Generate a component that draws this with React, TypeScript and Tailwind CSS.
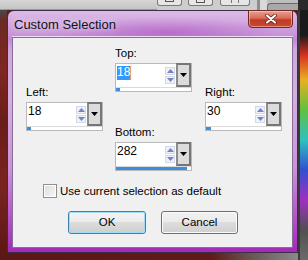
import React from "react";

function Arrow({ up }: { up?: boolean }) {
  return (
    <svg width="7" height="4" viewBox="0 0 7 4" className="block">
      {up ? (
        <polygon points="0,4 7,4 3.5,0" fill="#7483c6" />
      ) : (
        <polygon points="0,0 7,0 3.5,4" fill="#7483c6" />
      )}
    </svg>
  );
}

function NumField({
  value,
  fill,
  selected,
}: {
  value: string;
  fill: number;
  selected?: boolean;
}) {
  return (
    <div className="w-[77px] h-[29px] border border-[#b9b9b9] bg-white flex flex-col">
      <div className="flex h-[23px]">
        <div className="flex-1 pl-[1px] pt-[2px] text-[12px] leading-[13px] text-black">
          {selected ? (
            <span className="inline-block bg-[#3399ff] text-white px-0 pb-[1px] border-r border-[#e8a070]">
              {value}
            </span>
          ) : (
            <span className="inline-block pb-[1px]">{value}</span>
          )}
        </div>
        <div className="w-[10px] mt-[3px] mr-[1px] flex flex-col gap-[1px]">
          <div className="h-[8px] border border-[#d4d9e6] bg-[#eef1f8] flex items-center justify-center">
            <Arrow up />
          </div>
          <div className="h-[8px] border border-[#d4d9e6] bg-[#eef1f8] flex items-center justify-center">
            <Arrow />
          </div>
        </div>
        <div className="w-[15px] h-[24px] -mt-[1px] border-2 border-[#767676] border-l-[#8c8c8c] bg-[#dcdcdc] flex items-center justify-center">
          <svg width="7" height="4" viewBox="0 0 7 4" className="block">
            <polygon points="0,0 7,0 3.5,4" fill="#000" />
          </svg>
        </div>
      </div>
      <div className="flex-1 border-t border-[#dadada] bg-white flex">
        <div className="h-full bg-[#3a8ee4]" style={{ width: fill }} />
      </div>
    </div>
  );
}

function Label({ children }: { children: React.ReactNode }) {
  return (
    <div className="text-[11.5px] leading-[13px] mb-[3px] text-black">{children}</div>
  );
}

function Dialog() {
  return (
    <div className="w-[291px] h-[243px] shrink-0 rounded-t-[7px] border border-[#3e2c4a] bg-[linear-gradient(180deg,#dcbbe6_0%,#cc9cdc_8%,#c38ad6_12%,#d0a6de_16%,#d4b0e2_35%,#c894d8_65%,#b655cc_85%,#a22ab8_100%)] flex flex-col">
      <div className="h-[25px] flex justify-between bg-[radial-gradient(ellipse_at_55%_85%,rgba(160,60,180,0.45),rgba(160,60,180,0)_50%)]">
        <div className="pl-[6px] pt-[6px] text-[13px] leading-[15px] text-[#111] [text-shadow:0_0_6px_rgba(255,255,255,0.9)]">
          Custom Selection
        </div>
        <div className="w-[45px] h-[18px] -mt-[1px] mr-[4px] rounded-b-[4px] border border-[#6e2a24] bg-[linear-gradient(180deg,#eaa090_0%,#d86a58_45%,#c23a24_55%,#c84a30_100%)] flex items-center justify-center shadow-[inset_0_0_0_1px_rgba(255,220,210,0.5)]">
          <svg width="12" height="10" viewBox="0 0 12 10" className="block">
            <path d="M2 1.5 L10 8.5 M10 1.5 L2 8.5" stroke="#5a1a14" strokeWidth="3.6" strokeLinecap="round" />
            <path d="M2 1.5 L10 8.5 M10 1.5 L2 8.5" stroke="#ffffff" strokeWidth="2.2" strokeLinecap="round" />
          </svg>
        </div>
      </div>
      <div className="mx-[4px] border-t border-[#f0dcf4] h-[1px]" />
      <div className="mx-[4px] mb-[4px] flex-1 border border-[#8a6c98] bg-[#f0f0f0] flex flex-col font-['Liberation_Sans',Arial,sans-serif]">
        <div className="flex pl-[13px] gap-x-[12px]">
          <div className="pt-[48px]">
            <Label>Left:</Label>
            <NumField value="18" fill={4} />
          </div>
          <div className="pt-[9px]">
            <Label>Top:</Label>
            <NumField value="18" fill={4} selected />
            <div className="mt-[34px]">
              <Label>Bottom:</Label>
              <NumField value="282" fill={71} />
            </div>
          </div>
          <div className="pt-[48px] pl-[1px]">
            <Label>Right:</Label>
            <NumField value="30" fill={5} />
          </div>
        </div>
        <div className="mt-[13px] pl-[30px] flex items-center gap-[3px]">
          <div className="w-[14px] h-[14px] border border-[#8e8f8f] bg-[linear-gradient(135deg,#dcdcdc,#f8f8f8)] shadow-[inset_0_0_0_1px_#ffffff]" />
          <span className="text-[11.5px] leading-[14px] text-black">
            Use current selection as default
          </span>
        </div>
        <div className="mt-[13px] flex justify-center gap-[15px] pl-[1px]">
          <div className="w-[78px] h-[23px] rounded-[3px] border border-[#3c7fb1] bg-[linear-gradient(180deg,#eaf6fd_0%,#d9f0fc_45%,#bee6fd_50%,#a7d9f5_100%)] shadow-[inset_0_0_0_1px_#cbeefd] flex items-center justify-center text-[11.5px] text-black">
            <div className="w-full h-full rounded-[2px] border border-[#9fdcf6] bg-[linear-gradient(180deg,#f4f4f4_0%,#ebebeb_45%,#dddddd_50%,#cfcfcf_100%)] flex items-center justify-center">
              OK
            </div>
          </div>
          <div className="w-[77px] h-[23px] rounded-[3px] border border-[#707070] bg-[linear-gradient(180deg,#f2f2f2_0%,#ebebeb_45%,#dddddd_50%,#cfcfcf_100%)] shadow-[inset_0_0_0_1px_#fbfbfb] flex items-center justify-center text-[11.5px] text-black">
            Cancel
          </div>
        </div>
      </div>
    </div>
  );
}

export default function App() {
  return (
    <div className="w-[308px] h-[260px] overflow-hidden flex flex-col bg-[#5e1b17] font-['Liberation_Sans',Arial,sans-serif]">
      <div className="h-[10px] shrink-0 flex bg-[#cdcdcd]">
        <div className="w-[157px] border-b border-[#9a9a9a] bg-[linear-gradient(180deg,#d6d6d6,#c4c4c4)]" />
        <div className="w-[25px] h-[6px] rounded-b-[3px] border border-t-0 border-[#7a7a7a] bg-[#e6e6e6] flex justify-center">
          <div className="w-[9px] h-[2px] border border-t-0 border-[#555]" />
        </div>
        <div className="w-[6px]" />
        <div className="w-[25px] h-[6px] rounded-b-[3px] border border-t-0 border-[#7a7a7a] bg-[#e6e6e6] flex justify-center">
          <div className="w-[9px] h-[3px] border border-t-0 border-[#555]" />
        </div>
        <div className="w-[7px]" />
        <div className="w-[30px] h-[6px] rounded-b-[3px] border border-t-0 border-[#7a7a7a] bg-[#e6e6e6] flex justify-center">
          <div className="w-[8px] h-[3px] border-x border-[#777]" />
        </div>
        <div className="w-[7px]" />
        <div className="w-[3px] bg-[#8d8d8d]" />
        <div className="w-[7px] bg-[#d8d8d8]" />
        <div className="w-[31px] bg-[#bdbdbd] pt-[3px]">
          <div className="h-full rounded-tl-[4px] border-l border-t border-[#6a6a6a] bg-[#a8a8a8]" />
        </div>
        <div className="flex-1 bg-[#2a2a2a]" />
      </div>
      <div className="flex flex-1">
        <div className="w-[7px] shrink-0 bg-[linear-gradient(180deg,#4a4a4a_0%,#6a2a24_4%,#7e2722_25%,#6a1d19_45%,#7a2420_70%,#5a1713_100%)]" />
        <div className="flex flex-col">
          <Dialog />
          <div className="flex-1 bg-[linear-gradient(90deg,#5a1814_0%,#5e1b17_70%,#6a5a58_85%,#8a8a8a_100%)]" />
        </div>
        <div className="flex-1 flex">
          <div className="w-[2px] bg-[#3a3a3a]" />
          <div className="flex-1 bg-[linear-gradient(180deg,#1a1a1a_0%,#1a1a1a_10%,#d83020_18%,#e8b020_28%,#60c040_40%,#30c0c0_52%,#3050d0_64%,#a030c0_76%,#505050_88%,#6a6a6a_100%)]" />
        </div>
      </div>
    </div>
  );
}
